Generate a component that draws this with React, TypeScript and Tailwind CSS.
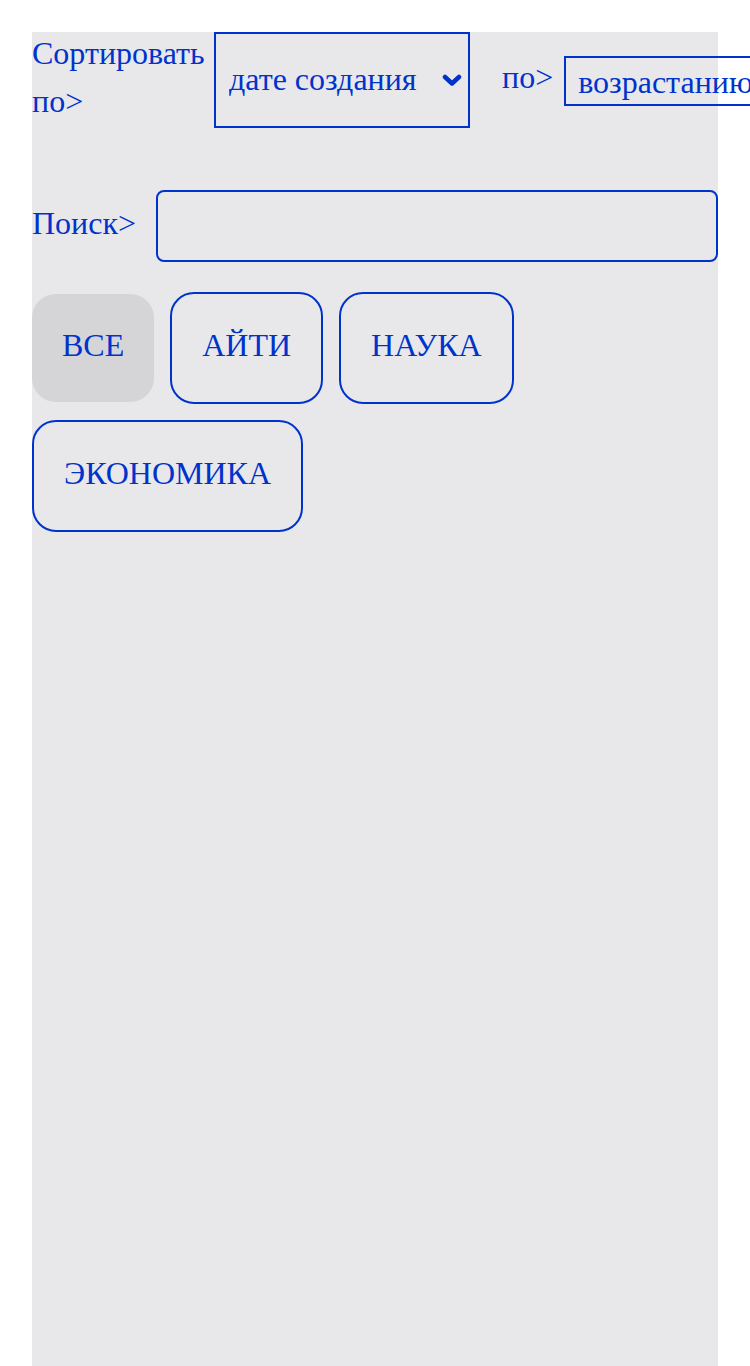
import { useState } from "react";

const categories = ["ВСЕ", "АЙТИ", "НАУКА", "ЭКОНОМИКА"];

export default function App() {
  const [active, setActive] = useState("ВСЕ");
  const [sortBy, setSortBy] = useState("created");
  const [order, setOrder] = useState("asc");
  const [query, setQuery] = useState("");

  return (
    <div className="w-full overflow-hidden bg-white px-8 pt-8 font-['Liberation_Serif',serif] text-[32px] leading-[48px] text-[#0033cc]">
      <div className="min-h-[1334px] bg-[#e8e8eb]">
        {/* Sort row */}
        <div className="flex h-[96px] items-center">
          <span className="-mt-[6px] w-[182px] shrink-0">Сортировать по&gt;</span>
          <div className="relative shrink-0">
            <select
              value={sortBy}
              onChange={(e) => setSortBy(e.target.value)}
              className="h-[96px] w-[256px] appearance-none border-2 border-[#0033cc] bg-transparent pb-[2px] pl-[13px] text-[#0033cc] outline-none"
            >
              <option value="created">дате создания</option>
              <option value="title">названию</option>
            </select>
            <svg
              className="pointer-events-none absolute right-[8px] top-[42px]"
              width="20"
              height="14"
              viewBox="0 0 20 14"
              fill="none"
            >
              <path d="M3 3 L10 9.5 L17 3" stroke="#0033cc" strokeWidth="4.5" strokeLinecap="round" strokeLinejoin="round" />
            </svg>
          </div>
          <span className="-mt-[6px] ml-8 shrink-0">по&gt;</span>
          <select
            value={order}
            onChange={(e) => setOrder(e.target.value)}
            className="ml-[11px] mt-[2px] h-[50px] w-[260px] shrink-0 appearance-none border-2 border-[#0033cc] bg-transparent pb-[2px] pl-3 text-[#0033cc] outline-none"
          >
            <option value="asc">возрастанию</option>
            <option value="desc">убыванию</option>
          </select>
        </div>

        {/* Search row */}
        <div className="mt-[62px] flex h-[72px] items-center">
          <span className="-mt-[6px] mr-5 shrink-0">Поиск&gt;</span>
          <input
            value={query}
            onChange={(e) => setQuery(e.target.value)}
            className="h-[72px] flex-1 rounded-lg border-2 border-[#0033cc] bg-transparent px-3 outline-none"
          />
        </div>

        {/* Category filter */}
        <div className="mt-[30px] flex flex-wrap items-center gap-4">
          {categories.map((c) => (
            <button
              key={c}
              onClick={() => setActive(c)}
              className={
                active === c
                  ? "rounded-[24px] bg-[#d5d5d8] px-[30px] pb-[33px] pt-[27px]"
                  : "rounded-[24px] border-2 border-[#0033cc] px-[30px] pb-[33px] pt-[27px]"
              }
            >
              {c}
            </button>
          ))}
        </div>
      </div>
    </div>
  );
}
